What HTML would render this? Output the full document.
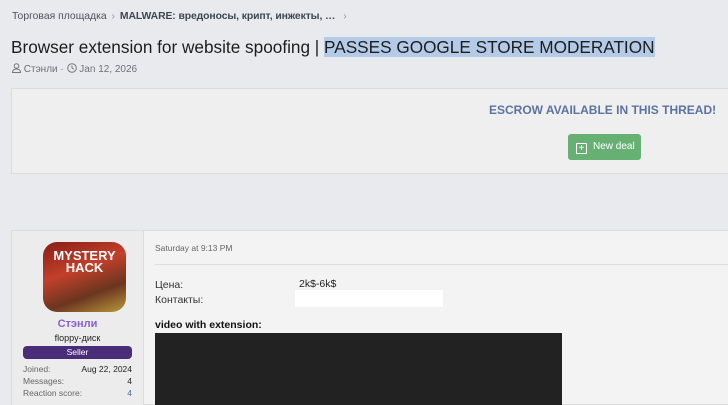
<!DOCTYPE html><html><head><meta charset="utf-8"><style>
body{margin:0;width:728px;height:405px;overflow:hidden;background:#e9eaed;font-family:"Liberation Sans",Arial,sans-serif;position:relative}
.a{position:absolute;white-space:nowrap}
</style></head><body>
<div class="a" style="left:12px;top:11px;font-size:10.4px;color:#4a5260">Торговая площадка <span style="color:#8a94a0;margin:0 2px">›</span> <b style="color:#3b4656;letter-spacing:-0.1px">MALWARE: вредоносы, крипт, инжекты, …</b> <span style="color:#8a94a0;margin-left:5px">›</span></div>
<div class="a" style="left:11px;top:37px;font-size:17.2px;color:#1d1d1d">Browser extension for website spoofing | <span style="background:#b4cbe8">PASSES GOOGLE STORE MODERATION</span></div>
<div class="a" style="left:12px;top:63px;font-size:10px;color:#6b717a">
<svg width="9" height="10" viewBox="0 0 9 10" style="vertical-align:-1px"><circle cx="4.5" cy="3" r="2.3" fill="none" stroke="#777"/><path d="M0.5 9.5c0-2.5 2-3.5 4-3.5s4 1 4 3.5z" fill="none" stroke="#777"/></svg> Стэнли · <svg width="10" height="10" viewBox="0 0 10 10" style="vertical-align:-1px"><circle cx="5" cy="5" r="4.3" fill="none" stroke="#777"/><path d="M5 2.5V5l1.8 1.2" fill="none" stroke="#777"/></svg> Jan 12, 2026</div>
<div class="a" style="left:11px;top:88px;width:717px;height:86px;background:#efefef;border:1px solid #dcdcdc;border-right:none;box-sizing:border-box"></div>
<div class="a" style="left:489px;top:103px;font-size:12px;font-weight:bold;color:#5a73a0">ESCROW AVAILABLE IN THIS THREAD!</div>
<div class="a" style="left:568px;top:134px;width:73px;height:26px;background:#66b073;border-radius:3px;color:#fff;font-size:10px;line-height:26px"><span style="display:inline-block;width:9px;height:9px;border:1px solid #fff;border-radius:1px;margin:0 6px 0 8px;vertical-align:-2px;text-align:center;line-height:9px;font-size:10px">+</span>New deal</div>
<div class="a" style="left:11px;top:230px;width:717px;height:175px;background:#f3f3f3;border:1px solid #dcdcdc;border-right:none;box-sizing:border-box"></div>
<div class="a" style="left:12px;top:231px;width:131px;height:174px;background:#ececec;border-right:1px solid #dcdcdc"></div>
<div class="a" style="left:43px;top:242px;width:83px;height:70px;border-radius:14px;background:linear-gradient(160deg,#8a1d16,#c2402a 40%,#6b3520 70%,#b89a3a);overflow:hidden"><div style="color:#fff;font-weight:bold;font-size:13px;text-align:center;margin-top:8px;line-height:12px">MYSTERY<br>HACK</div></div>
<div class="a" style="left:0;width:155px;top:318px;text-align:center;font-size:11px;font-weight:bold;color:#8a5fd0">Стэнли</div>
<div class="a" style="left:0;width:155px;top:333px;text-align:center;font-size:9px;color:#222">floppy-диск</div>
<div class="a" style="left:23px;top:346px;width:109px;height:13px;background:#4a2d78;border-radius:4px;color:#fff;font-size:8.5px;text-align:center;line-height:13px">Seller</div>
<div class="a" style="left:23px;top:363px;width:109px;font-size:8.5px;color:#666;line-height:12px">Joined:<br>Messages:<br>Reaction score:</div>
<div class="a" style="left:23px;top:363px;width:109px;font-size:8.5px;color:#222;line-height:12px;text-align:right">Aug 22, 2024<br>4<br><span style="color:#4a6aa0">4</span></div>
<div class="a" style="left:155px;top:243px;font-size:8.5px;color:#666">Saturday at 9:13 PM</div>
<div class="a" style="left:155px;top:264px;width:573px;height:1px;background:#dcdcdc"></div>
<div class="a" style="left:155px;top:278px;font-size:10.5px;color:#333;line-height:15px">Цена:<br>Контакты:</div>
<div class="a" style="left:299px;top:278px;font-size:10.5px;color:#222">2k$-6k$</div>
<div class="a" style="left:295px;top:290px;width:148px;height:17px;background:#fff"></div>
<div class="a" style="left:155px;top:319px;font-size:10.5px;font-weight:bold;color:#111">video with extension:</div>
<div class="a" style="left:155px;top:333px;width:407px;height:72px;background:#222"></div>
</body></html>
